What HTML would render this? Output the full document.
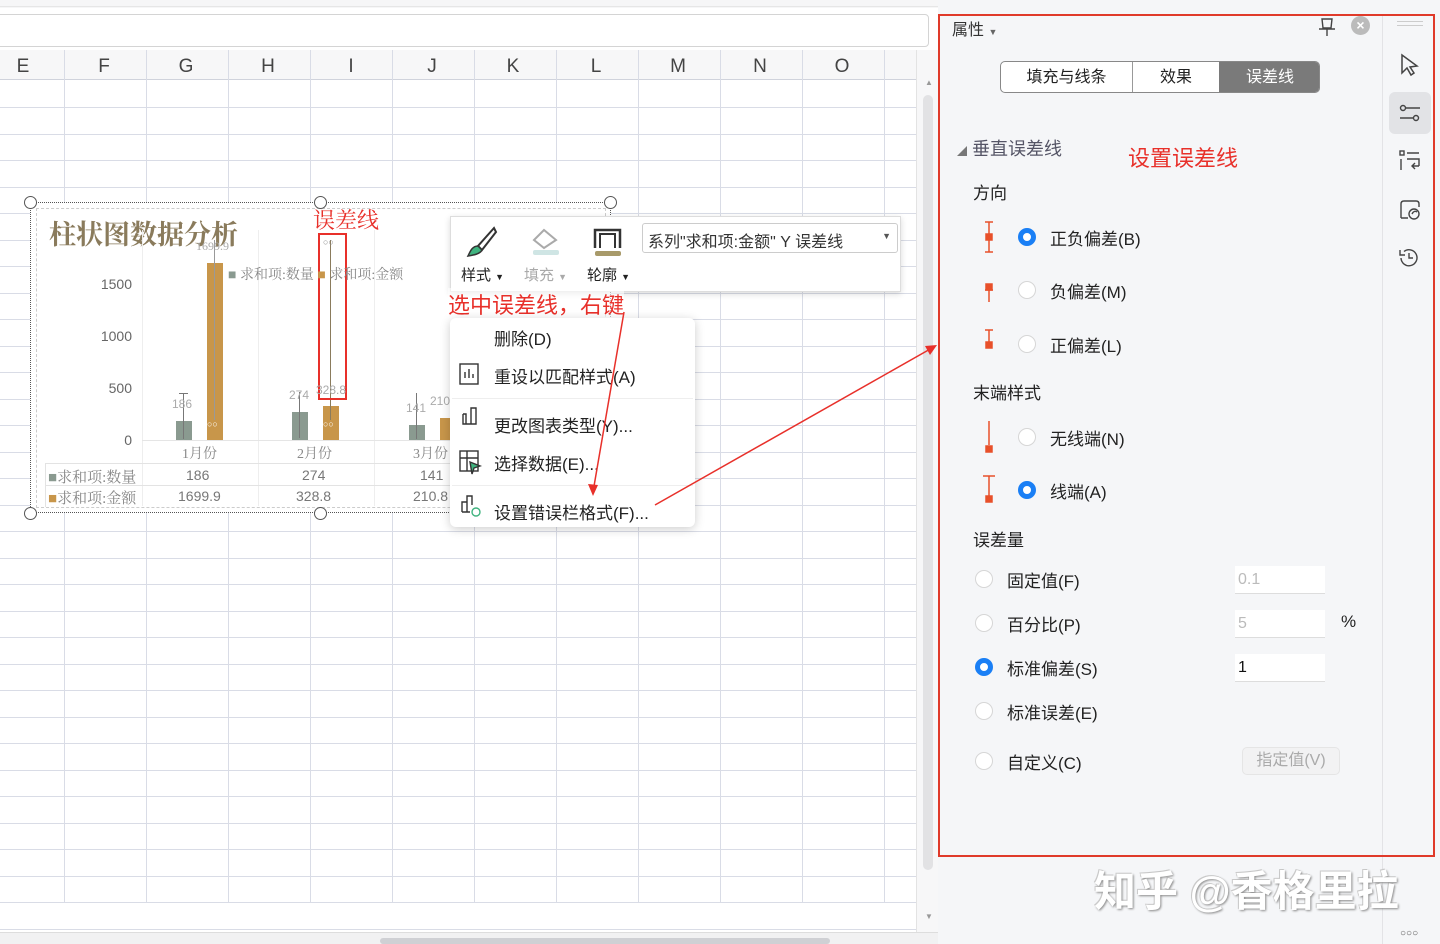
<!DOCTYPE html>
<html><head><meta charset="utf-8">
<style>
*{margin:0;padding:0;box-sizing:border-box}
body{width:1440px;height:944px;overflow:hidden;background:#fff;font-family:"Liberation Sans","Noto Sans CJK SC",sans-serif;position:relative;color:#222}
.a{position:absolute}
.vl{position:absolute;top:80px;width:1px;height:852px;background:#d9dce6}
.hl{position:absolute;left:0;width:916px;height:1px;background:#d9dce6}
.col{position:absolute;top:56px;font-size:19px;color:#444;width:40px;text-align:center}
.cap{font-family:"Liberation Serif","Noto Serif CJK SC",serif}
.menuitem{position:absolute;left:494px;font-size:17px;color:#222}
.rad{position:absolute;width:18px;height:18px;border-radius:50%;border:1px solid #d6d6d6;background:#fff}
.rad.on{border:5px solid #1a7ff5;background:#fff}
.pl{position:absolute;font-size:17px;color:#222}
.inp{position:absolute;left:1235px;width:90px;height:28px;background:#fff;border-bottom:1px solid #ddd;font-size:16px;padding:5px 3px;color:#bbb}
</style></head><body>
<div class="a" style="left:0;top:0;width:938px;height:8px;background:#f6f6f7"></div>
<div class="a" style="left:0;top:6px;width:938px;height:1px;background:#e6e6e6"></div>
<div class="a" style="left:-5px;top:14px;width:934px;height:33px;border:1px solid #d4d4d4;border-radius:4px;background:#fff"></div>
<div class="a" style="left:0;top:50px;width:916px;height:30px;background:#f7f7f8;border-bottom:1px solid #d0d3dc"></div>
<div class="col" style="left:3px">E</div><div class="col" style="left:84px">F</div><div class="col" style="left:166px">G</div><div class="col" style="left:248px">H</div><div class="col" style="left:331px">I</div><div class="col" style="left:412px">J</div><div class="col" style="left:493px">K</div><div class="col" style="left:576px">L</div><div class="col" style="left:658px">M</div><div class="col" style="left:740px">N</div><div class="col" style="left:822px">O</div>
<div class="vl" style="left:64px;top:50px"></div><div class="vl" style="left:146px;top:50px"></div><div class="vl" style="left:228px;top:50px"></div><div class="vl" style="left:310px;top:50px"></div><div class="vl" style="left:392px;top:50px"></div><div class="vl" style="left:474px;top:50px"></div><div class="vl" style="left:556px;top:50px"></div><div class="vl" style="left:638px;top:50px"></div><div class="vl" style="left:720px;top:50px"></div><div class="vl" style="left:802px;top:50px"></div><div class="vl" style="left:884px;top:50px"></div>
<div id="rows"></div>
<script>
var h='';for(var y=107;y<935;y+=26.5){h+='<div class="hl" style="top:'+Math.round(y)+'px"></div>'}document.getElementById('rows').innerHTML=h;
</script>
<div class="a" style="left:916px;top:50px;width:22px;height:882px;background:#f7f7f8;border-left:1px solid #e3e3e3"></div>
<div class="a" style="left:923px;top:95px;width:10px;height:775px;background:#e2e2e4;border-radius:5px"></div>
<div class="a" style="left:925px;top:78px;font-size:8px;color:#999">▲</div>
<div class="a" style="left:925px;top:912px;font-size:8px;color:#999">▼</div>
<div class="a" style="left:0;top:932px;width:938px;height:12px;background:#f1f1f2;border-top:1px solid #ddd"></div>
<div class="a" style="left:380px;top:938px;width:450px;height:6px;background:#cfd0d4;border-radius:3px"></div>

<div class="a" style="left:30px;top:202px;width:581px;height:311px;border:1.5px dotted #555;background:#fff"></div>
<div class="a" style="left:36px;top:208px;width:570px;height:300px;border:1px dashed #ccc"></div>
<div class="a cap" style="left:49px;top:213px;font-size:27px;color:#8a7b5c;font-weight:bold">柱状图数据分析</div>
<div class="a cap" style="left:313px;top:204px;font-size:22px;color:#e8302a">误差线</div>
<div class="a" style="left:142px;top:230px;width:1px;height:276px;background:#eee"></div>
<div class="a" style="left:258px;top:230px;width:1px;height:276px;background:#eee"></div>
<div class="a" style="left:374px;top:230px;width:1px;height:276px;background:#eee"></div>
<div class="a" style="left:142px;top:440px;width:340px;height:1px;background:#e5e5e5"></div>
<div class="a" style="left:96px;top:276px;width:36px;text-align:right;font-size:14px;color:#666">1500</div>
<div class="a" style="left:96px;top:328px;width:36px;text-align:right;font-size:14px;color:#666">1000</div>
<div class="a" style="left:96px;top:380px;width:36px;text-align:right;font-size:14px;color:#666">500</div>
<div class="a" style="left:96px;top:432px;width:36px;text-align:right;font-size:14px;color:#666">0</div>
<div class="a" style="left:176px;top:421px;width:16px;height:19px;background:#8a9a90"></div>
<div class="a" style="left:207px;top:263px;width:16px;height:177px;background:#c8964a"></div>
<div class="a" style="left:292px;top:412px;width:16px;height:28px;background:#8a9a90"></div>
<div class="a" style="left:323px;top:406px;width:16px;height:34px;background:#c8964a"></div>
<div class="a" style="left:409px;top:425px;width:16px;height:15px;background:#8a9a90"></div>
<div class="a" style="left:440px;top:418px;width:12px;height:22px;background:#c8964a"></div>
<div class="a" style="left:183px;top:393px;width:1px;height:46px;background:#777"></div>
<div class="a" style="left:179px;top:393px;width:9px;height:1px;background:#777"></div>
<div class="a" style="left:299px;top:392px;width:1px;height:46px;background:#777"></div>
<div class="a" style="left:416px;top:393px;width:1px;height:46px;background:#777"></div>
<div class="a" style="left:214px;top:240px;width:1px;height:180px;background:#999"></div>
<div class="a" style="left:330px;top:240px;width:1px;height:180px;background:#8a7b5c"></div>
<div class="a" style="left:318px;top:233px;width:29px;height:167px;border:2px solid #e8302a"></div>
<div class="a" style="left:207px;top:419px;font-size:9px;color:#fff">○○</div>
<div class="a" style="left:323px;top:419px;font-size:9px;color:#fff">○○</div>
<div class="a" style="left:323px;top:237px;font-size:9px;color:#888">○○</div>
<div class="a cap" style="left:196px;top:239px;font-size:12px;color:#aaa">1699.9</div>
<div class="a" style="left:172px;top:397px;font-size:12px;color:#aaa">186</div>
<div class="a" style="left:289px;top:388px;font-size:12px;color:#aaa">274</div>
<div class="a" style="left:316px;top:383px;font-size:12px;color:#aaa">328.8</div>
<div class="a" style="left:406px;top:401px;font-size:12px;color:#aaa">141</div>
<div class="a" style="left:430px;top:394px;font-size:12px;color:#aaa">210</div>
<div class="a cap" style="left:228px;top:264px;font-size:14px;color:#888"><span style="color:#8a9a90">■</span> 求和项:数量 <span style="color:#c8964a">■</span> 求和项:金额</div>
<div class="a cap" style="left:182px;top:443px;font-size:14px;color:#888">1月份</div>
<div class="a cap" style="left:297px;top:443px;font-size:14px;color:#888">2月份</div>
<div class="a cap" style="left:413px;top:443px;font-size:14px;color:#888">3月份</div>
<div class="a" style="left:45px;top:463px;width:440px;height:44px;border-top:1px solid #e3e3e3;border-left:1px solid #e3e3e3"></div>
<div class="a" style="left:45px;top:485px;width:440px;height:1px;background:#e3e3e3"></div>
<div class="a cap" style="left:48px;top:466px;font-size:15px;color:#888"><span style="color:#8a9a90">■</span>求和项:数量</div>
<div class="a cap" style="left:48px;top:487px;font-size:15px;color:#888"><span style="color:#c8964a">■</span>求和项:金额</div>
<div class="a" style="left:186px;top:467px;font-size:14px;color:#777">186</div>
<div class="a" style="left:302px;top:467px;font-size:14px;color:#777">274</div>
<div class="a" style="left:420px;top:467px;font-size:14px;color:#777">141</div>
<div class="a" style="left:178px;top:488px;font-size:14px;color:#777">1699.9</div>
<div class="a" style="left:296px;top:488px;font-size:14px;color:#777">328.8</div>
<div class="a" style="left:413px;top:488px;font-size:14px;color:#777">210.8</div>
<div class="a" style="left:24px;top:196px;width:13px;height:13px;border:1px solid #555;border-radius:50%;background:#fff"></div>
<div class="a" style="left:314px;top:196px;width:13px;height:13px;border:1px solid #555;border-radius:50%;background:#fff"></div>
<div class="a" style="left:604px;top:196px;width:13px;height:13px;border:1px solid #555;border-radius:50%;background:#fff"></div>
<div class="a" style="left:24px;top:507px;width:13px;height:13px;border:1px solid #555;border-radius:50%;background:#fff"></div>
<div class="a" style="left:314px;top:507px;width:13px;height:13px;border:1px solid #555;border-radius:50%;background:#fff"></div>

<div class="a" style="left:450px;top:216px;width:451px;height:76px;background:#fff;border:1px solid #ddd;box-shadow:0 2px 6px rgba(0,0,0,.15)"></div>
<svg class="a" style="left:464px;top:224px" width="36" height="36" viewBox="0 0 36 36"><path d="M30 4 L14 22 L18 26 L32 8 Z" fill="none" stroke="#333" stroke-width="2"/><path d="M14 22 C8 22 6 28 4 32 C10 31 16 30 18 26 Z" fill="#3fb37f" stroke="#333" stroke-width="1.5"/></svg>
<svg class="a" style="left:528px;top:224px" width="36" height="36" viewBox="0 0 36 36"><path d="M6 16 L16 6 L28 16 L16 24 Z" fill="none" stroke="#aaa" stroke-width="2"/><rect x="5" y="26" width="26" height="5" rx="2" fill="#cfe5e4"/></svg>
<svg class="a" style="left:590px;top:224px" width="36" height="36" viewBox="0 0 36 36"><path d="M5 24 V6 H30 V24" fill="none" stroke="#333" stroke-width="2.5"/><path d="M10 24 V10 H25 V24" fill="none" stroke="#333" stroke-width="2"/><rect x="5" y="27" width="26" height="5" rx="2" fill="#a89a6a"/></svg>
<div class="a" style="left:461px;top:264px;font-size:15px;color:#222">样式 <span style="font-size:9px">▼</span></div>
<div class="a" style="left:524px;top:264px;font-size:15px;color:#aaa">填充 <span style="font-size:9px">▼</span></div>
<div class="a" style="left:587px;top:264px;font-size:15px;color:#222">轮廓 <span style="font-size:9px">▼</span></div>
<div class="a" style="left:642px;top:223px;width:256px;height:30px;border:1px solid #ccc;border-radius:3px;font-size:16px;padding:4px 5px;color:#333">系列"求和项:金额" Y 误差线<span style="position:absolute;right:6px;top:7px;font-size:9px;color:#555">▼</span></div>
<div class="a" style="left:448px;top:288px;font-size:22px;color:#e8302a;background:rgba(255,255,255,.6)">选中误差线，右键</div>

<div class="a" style="left:450px;top:318px;width:245px;height:209px;background:#fff;border-radius:6px;box-shadow:0 2px 10px rgba(0,0,0,.2)"></div>
<div class="menuitem" style="top:325px">删除(D)</div>
<div class="menuitem" style="top:363px">重设以匹配样式(A)</div>
<div class="a" style="left:452px;top:398px;width:241px;height:1px;background:#eee"></div>
<div class="menuitem" style="top:412px">更改图表类型(Y)...</div>
<div class="menuitem" style="top:450px">选择数据(E)...</div>
<div class="a" style="left:452px;top:485px;width:241px;height:1px;background:#eee"></div>
<div class="menuitem" style="top:499px">设置错误栏格式(F)...</div>
<svg class="a" style="left:458px;top:362px" width="26" height="160" viewBox="0 0 26 160" fill="none" stroke="#333" stroke-width="1.4"><rect x="2" y="2" width="18" height="20"/><path d="M7 16V10M11 16V7M15 16V12"/><path d="M5 52V62H18V46H13V62M8 62V52H5" /><rect x="2" y="89" width="18" height="20"/><path d="M2 96H20M9 89V109" /><path d="M12 100L22 104L16 106L14 112Z" fill="#3fb37f" stroke="#333"/><path d="M4 150V140H9V150M9 150V134H14V143M4 150H12"/><circle cx="18" cy="150" r="4" stroke="#3fb37f"/></svg>
<svg class="a" style="left:0;top:0" width="940" height="944"><path d="M624 312 L593 492" stroke="#e8302a" stroke-width="1.5"/><path d="M588 484 L593 496 L598 485Z" fill="#e8302a"/><path d="M655 505 L932 348" stroke="#e8302a" stroke-width="1.5"/><path d="M925 346 L937 345 L930 355Z" fill="#e8302a"/></svg>

<div class="a" style="left:938px;top:0;width:502px;height:944px;background:#f5f6f8"></div>
<div class="a" style="left:1382px;top:14px;width:1px;height:930px;background:#e3e3e6"></div>
<div class="a" style="left:938px;top:14px;width:497px;height:843px;border:2px solid #e03a2a"></div>
<div class="a" style="left:952px;top:16px;font-size:16px;color:#333">属性 <span style="font-size:9px;color:#666">▼</span></div>
<svg class="a" style="left:1316px;top:16px" width="22" height="22" viewBox="0 0 22 22" fill="none" stroke="#444" stroke-width="1.4"><path d="M6 3H16L15 12H7Z M3 13H19 M11 13V20"/></svg>
<div class="a" style="left:1351px;top:16px;width:19px;height:19px;border-radius:50%;background:#bbb;color:#fff;font-size:14px;text-align:center;line-height:19px;font-weight:bold">×</div>
<div class="a" style="left:1397px;top:21px;width:26px;height:1px;background:#ccc"></div><div class="a" style="left:1397px;top:25px;width:26px;height:1px;background:#ccc"></div>
<div class="a" style="left:1000px;top:61px;width:320px;height:32px;border:1px solid #888;border-radius:5px;background:#fff;overflow:hidden;font-size:16px">
<div class="a" style="left:0;top:0;width:132px;height:30px;text-align:center;line-height:32px;border-right:1px solid #999">填充与线条</div>
<div class="a" style="left:132px;top:0;width:86px;height:30px;text-align:center;line-height:32px">效果</div>
<div class="a" style="left:218px;top:0;width:102px;height:30px;text-align:center;line-height:32px;background:#7a7a7a;color:#fff">误差线</div></div>
<div class="a" style="left:957px;top:135px;font-size:18px;color:#556"><span style="font-size:10px;color:#777">◢</span> 垂直误差线</div>
<div class="a" style="left:1128px;top:141px;font-size:22px;color:#e8302a">设置误差线</div>
<div class="pl" style="left:973px;top:179px">方向</div>
<div class="pl" style="left:973px;top:379px">末端样式</div>
<div class="pl" style="left:973px;top:526px">误差量</div>
<svg class="a" style="left:980px;top:220px" width="20" height="300" viewBox="0 0 20 300" stroke="#e8502a" stroke-width="1.5" fill="#e8502a"><path d="M5 2H13M9 2V32M5 32H13" fill="none"/><rect x="6" y="14" width="6" height="6"/><path d="M5 70H13M9 70V82" fill="none"/><rect x="6" y="64" width="6" height="6"/><path d="M5 110H13M9 110V122" fill="none"/><rect x="6" y="122" width="6" height="6"/><path d="M9 201V225" fill="none"/><rect x="6" y="226" width="6" height="6"/><path d="M3 256H15M9 256V276" fill="none"/><rect x="6" y="276" width="6" height="6"/></svg>
<div class="rad on" style="left:1018px;top:228px"></div><div class="pl" style="left:1050px;top:225px">正负偏差(B)</div>
<div class="rad" style="left:1018px;top:281px"></div><div class="pl" style="left:1050px;top:278px">负偏差(M)</div>
<div class="rad" style="left:1018px;top:335px"></div><div class="pl" style="left:1050px;top:332px">正偏差(L)</div>
<div class="rad" style="left:1018px;top:428px"></div><div class="pl" style="left:1050px;top:425px">无线端(N)</div>
<div class="rad on" style="left:1018px;top:481px"></div><div class="pl" style="left:1050px;top:478px">线端(A)</div>
<div class="rad" style="left:975px;top:570px"></div><div class="pl" style="left:1007px;top:567px">固定值(F)</div>
<div class="rad" style="left:975px;top:614px"></div><div class="pl" style="left:1007px;top:611px">百分比(P)</div>
<div class="rad on" style="left:975px;top:658px"></div><div class="pl" style="left:1007px;top:655px">标准偏差(S)</div>
<div class="rad" style="left:975px;top:702px"></div><div class="pl" style="left:1007px;top:699px">标准误差(E)</div>
<div class="rad" style="left:975px;top:752px"></div><div class="pl" style="left:1007px;top:749px">自定义(C)</div>
<div class="inp" style="top:566px">0.1</div>
<div class="inp" style="top:610px">5</div>
<div class="pl" style="left:1341px;top:612px">%</div>
<div class="inp" style="top:654px;color:#111">1</div>
<div class="a" style="left:1242px;top:747px;width:98px;height:28px;border-radius:5px;background:#f2f2f3;border:1px solid #e5e5e5;font-size:16px;color:#aaa;text-align:center;line-height:26px">指定值(V)</div>
<svg class="a" style="left:1398px;top:52px" width="24" height="26" viewBox="0 0 24 26" fill="none" stroke="#444" stroke-width="1.5"><path d="M4 3L4 21L9 16L13 23L16 21L12 15L19 14Z"/></svg>
<div class="a" style="left:1389px;top:92px;width:42px;height:42px;border-radius:6px;background:#e2e3e6"></div>
<svg class="a" style="left:1398px;top:101px" width="24" height="24" viewBox="0 0 24 24" fill="none" stroke="#444" stroke-width="1.4"><circle cx="5" cy="7" r="2.5"/><path d="M8 7H22M2 17H15"/><circle cx="18" cy="17" r="2.5"/></svg>
<svg class="a" style="left:1398px;top:148px" width="24" height="26" viewBox="0 0 24 26" fill="none" stroke="#444" stroke-width="1.4"><rect x="2" y="3" width="4" height="4"/><path d="M9 5H21M3 11V22M9 11H21V18M14 18H21M17 15L14 18L17 21"/></svg>
<svg class="a" style="left:1398px;top:198px" width="24" height="24" viewBox="0 0 24 24" fill="none" stroke="#444" stroke-width="1.4"><path d="M3 20V6Q3 3 6 3H18Q21 3 21 6V9M3 20H10"/><circle cx="16" cy="16" r="5"/><path d="M14 16Q16 12 19 14"/></svg>
<svg class="a" style="left:1397px;top:246px" width="24" height="24" viewBox="0 0 24 24" fill="none" stroke="#444" stroke-width="1.4"><path d="M4 12A8 8 0 1 0 7 5.5M3 4V9H8M12 7V12H16"/></svg>
<div class="a" style="left:1094px;top:858px;font-size:42px;color:#fff;font-weight:bold;text-shadow:1px 1px 2px #888,-1px -1px 0 #ccc;letter-spacing:0px">知乎 @香格里拉</div>
<div class="a" style="left:1400px;top:928px;font-size:10px;color:#555">○○○</div>
</body></html>
